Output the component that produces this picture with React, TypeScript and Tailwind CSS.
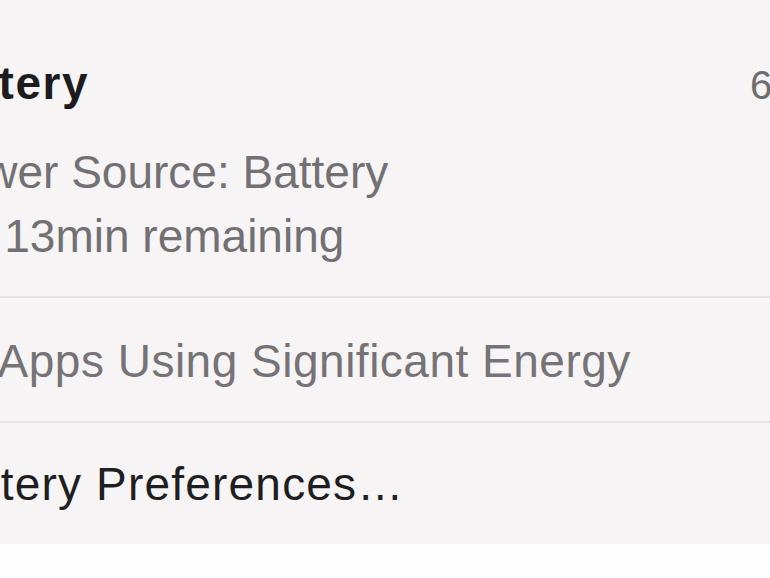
const font = { fontFamily: '"Liberation Sans", Arial, sans-serif' };

const Divider = () => <div className="h-[2px] bg-[#e4e2e3]" />;

const BatteryMenu = () => {
  return (
    <div className="h-[578px] w-[770px] overflow-hidden bg-[#fdfdfd]" style={font}>
      {/* menu panel, zoomed in so the left edge is cut off */}
      <div className="-ml-[100px] w-[960px] bg-[#f6f4f5] px-[28px] pt-[55px] pb-[28px]">
        {/* header */}
        <div className="flex items-baseline justify-between leading-[56px]">
          <span className="-ml-[8px] text-[46px] font-bold tracking-[1.5px] text-[#1c1c1e]">Battery</span>
          <span className="pr-[2px] text-[40px] text-[#6e6d6e]">65%</span>
        </div>

        {/* info */}
        <div className="mt-[27px] text-[46px] leading-[64px] text-[#727072]">
          <p>Power Source: Battery</p>
          <p className="-ml-[3px]">2hr 13min remaining</p>
        </div>

        <div className="mt-[28px]">
          <Divider />
        </div>

        <p className="mt-[31px] -ml-[1px] text-[46px] leading-[64px] tracking-[0.5px] text-[#757375]">
          No Apps Using Significant Energy
        </p>

        <div className="mt-[28px]">
          <Divider />
        </div>

        <p className="mt-[29px] text-[46px] leading-[64px] tracking-[1.2px] text-[#1f1f21]">
          Battery Preferences…
        </p>
      </div>
    </div>
  );
};

export default function App() {
  return <BatteryMenu />;
}
